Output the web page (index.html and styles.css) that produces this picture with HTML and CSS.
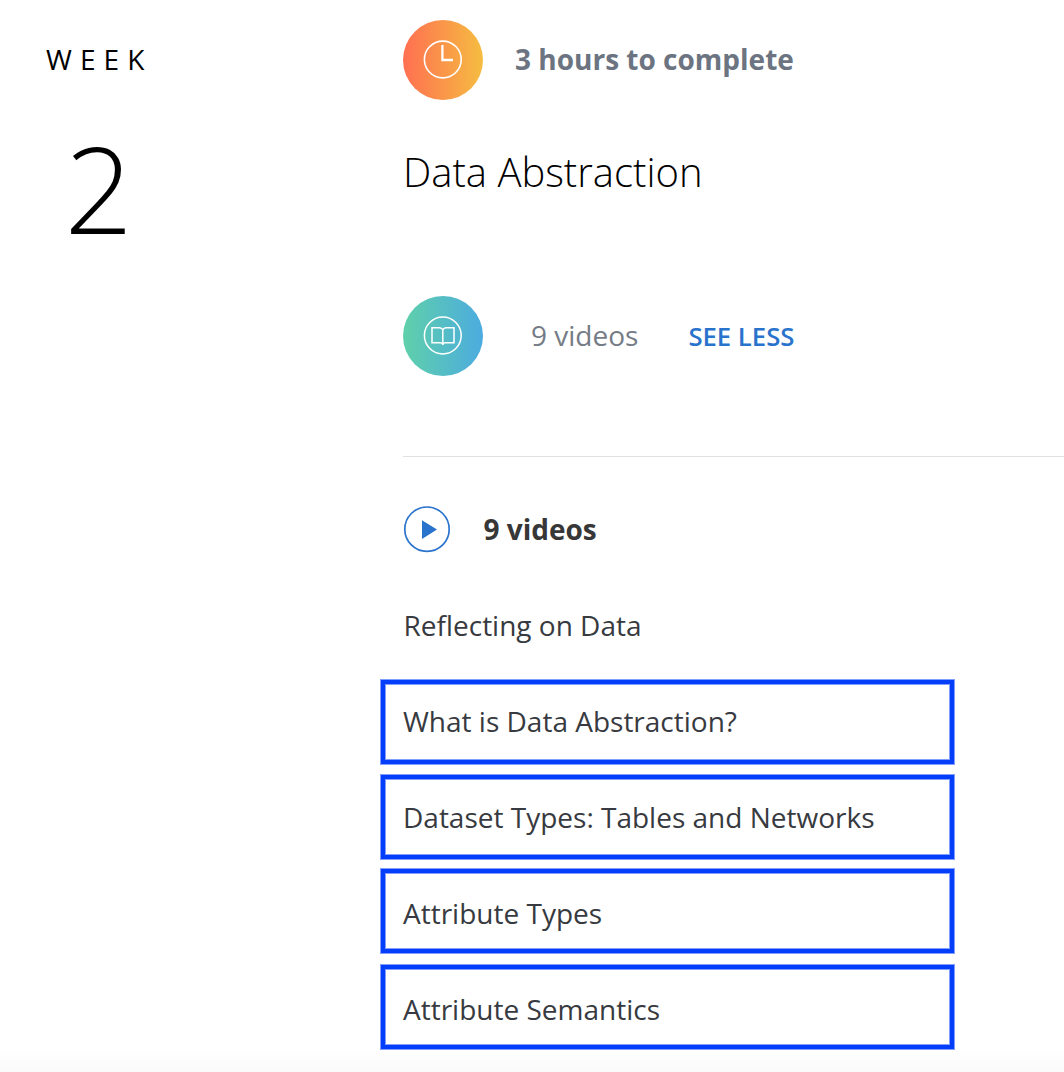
FILE: index.html
```html
<!DOCTYPE html>
<html lang="en">
<head>
<meta charset="utf-8">
<title>Week 2</title>
<link rel="stylesheet" href="styles.css">
</head>
<body>
<div class="page">
  <aside class="week">
    <div class="week-label">WEEK</div>
    <div class="week-number">2</div>
  </aside>
  <main class="content">
    <div class="duration">
      <svg class="badge" viewBox="0 0 80 80">
        <defs><linearGradient id="warm"><stop offset="0" stop-color="#ff6f51"/><stop offset="1" stop-color="#f5bd41"/></linearGradient></defs>
        <circle cx="40" cy="40" r="40" fill="url(#warm)"/>
        <g fill="none" stroke="#fff"><circle cx="39.8" cy="39.5" r="18.4" stroke-width="1.6"/><path d="M39.4 25V40H50" stroke-width="2.3"/></g>
      </svg>
      <span class="duration-text">3 hours to complete</span>
    </div>
    <h2 class="title">Data Abstraction</h2>
    <div class="summary">
      <svg class="badge" viewBox="0 0 80 80">
        <defs><linearGradient id="cool"><stop offset="0" stop-color="#5fd0aa"/><stop offset="1" stop-color="#4cabdf"/></linearGradient></defs>
        <circle cx="40" cy="40" r="40" fill="url(#cool)"/>
        <g fill="none" stroke="#fff" stroke-width="1.5"><circle cx="39.8" cy="39.5" r="18.4"/><path d="M39.8 34Q39 31.8 36.5 31.8H29V46.8H37Q39.4 46.8 39.8 48.5Q40.2 46.8 42.6 46.8H51V31.8H43Q40.6 31.8 39.8 34V49"/></g>
      </svg>
      <span class="count">9 videos</span>
      <a class="toggle">SEE LESS</a>
    </div>
    <section class="videos">
      <div class="videos-head">
        <svg class="play" viewBox="0 0 48 48"><circle cx="24" cy="24.2" r="22.2" fill="none" stroke="#2a73cc" stroke-width="1.7"/><path d="M19 15.3L34 24.5L19 34Z" fill="#2a73cc"/></svg>
        <span class="videos-title">9 videos</span>
      </div>
      <div class="first">Reflecting on Data</div>
      <div class="list">
        <div class="item">What is Data Abstraction?</div>
        <div class="item">Dataset Types: Tables and Networks</div>
        <div class="item">Attribute Types</div>
        <div class="item">Attribute Semantics</div>
      </div>
    </section>
  </main>
</div>
</body>
</html>
```
FILE: styles.css
```css
* { box-sizing: border-box; }
body { margin: 0; background: #fff; font-family: "Open Sans", sans-serif; font-size: 28px; line-height: 40px; color: #373a40; }
.page { display: grid; grid-template-columns: 403px 1fr; height: 1072px; overflow: hidden; white-space: nowrap; background: linear-gradient(#fff 1048px, #fafafa 1072px); }
.week { padding: 39px 0 0 46px; color: #000; }
.week-label { letter-spacing: 8.1px; }
.week-number { padding-left: 18.5px; margin-top: 29px; font-size: 120px; line-height: 160px; font-weight: 300; }
.content { padding-top: 20px; }
.duration, .summary, .videos-head { display: flex; align-items: center; }
.badge { width: 80px; height: 80px; }
.duration-text { margin-left: 32px; padding-bottom: 2px; font-weight: 700; color: #6b7480; }
.title { margin: 42px 0 0; height: 60px; font-size: 40px; line-height: 60px; font-weight: 300; color: #000; }
.summary { margin-top: 94px; }
.count { margin-left: 48px; padding-bottom: 2px; color: #757c86; }
.toggle { margin-left: 50px; padding-top: 2px; font-size: 25.7px; font-weight: 600; color: #2a73cc; }
.videos { margin-top: 80px; border-top: 1px solid #e1e1e1; }
.videos-head { margin-top: 48px; height: 48px; }
.play { width: 48px; height: 48px; }
.videos-title { margin-left: 32.5px; font-weight: 700; color: #373737; }
.first { margin-top: 52px; padding-left: 0.5px; }
.list { display: grid; grid-template-rows: 95px 94px 96px 84px; margin: 35px 0 0 -22px; width: 573px; }
.item { height: 84px; padding: 17px 18px; border: 4px solid #053efa; box-shadow: 0 0 0 1px #819efc, inset 0 0 0 1px #819efc; }
.item:nth-child(2) { padding-top: 18px; }
.item:nth-child(3) { padding-top: 20px; }
.item:nth-child(4) { padding-top: 20px; }
```
